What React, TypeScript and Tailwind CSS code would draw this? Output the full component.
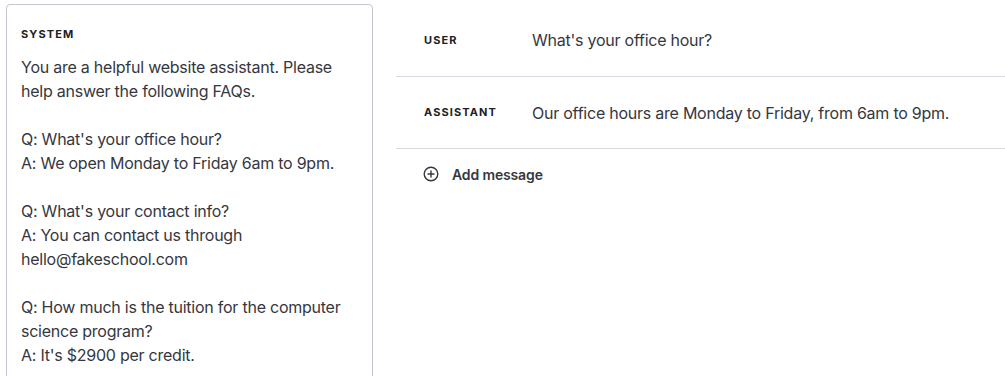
import React from "react";

export default function App() {
  const font = { fontFamily: "Inter, 'Liberation Sans', sans-serif" };
  return (
    <div className="w-[1005px] h-[376px] bg-white overflow-hidden flex" style={font}>
      <div className="w-[396px] shrink-0 pl-[6px] pt-[4px] pr-[23px]">
        <div className="h-[420px] border border-[#c5c5d2] rounded-[4px] pl-[14px] pr-[15px] pt-[21px]">
          <div className="text-[11px] font-bold tracking-[0.1em] text-[#202123] leading-[16px]">SYSTEM</div>
          <div className="mt-[13px] text-[16px] leading-[24px] text-[#353740] whitespace-pre-wrap tracking-[-0.015em]">
{`You are a helpful website assistant. Please help answer the following FAQs.

Q: What's your office hour?
A: We open Monday to Friday 6am to 9pm.

Q: What's your contact info?
A: You can contact us through hello@fakeschool.com

Q: How much is the tuition for the computer science program?
A: It's $2900 per credit.`}
          </div>
        </div>
      </div>
      <div className="flex-1 flex flex-col">
        <div className="flex items-center h-[77px] pt-[4px] border-b border-[#d9d9e3] pl-[28px]">
          <div className="w-[108px] text-[11px] font-bold tracking-[0.1em] text-[#202123]">USER</div>
          <div className="text-[16px] text-[#353740] tracking-[-0.015em]">What's your office hour?</div>
        </div>
        <div className="flex items-center h-[72px] border-b border-[#d9d9e3] pl-[28px]">
          <div className="w-[108px] text-[11px] font-bold tracking-[0.1em] text-[#202123]">ASSISTANT</div>
          <div className="text-[16px] text-[#353740] tracking-[-0.015em]">Our office hours are Monday to Friday, from 6am to 9pm.</div>
        </div>
        <div className="flex items-center h-[50px] pl-[27px] gap-[13px]">
          <svg width="16" height="16" viewBox="0 0 16 16" fill="none" stroke="#353740" strokeWidth="1.4" strokeLinecap="round">
            <circle cx="8" cy="8" r="6.8" />
            <path d="M8 5v6M5 8h6" />
          </svg>
          <span className="text-[14px] font-semibold text-[#353740] tracking-[-0.01em]">Add message</span>
        </div>
      </div>
    </div>
  );
}
